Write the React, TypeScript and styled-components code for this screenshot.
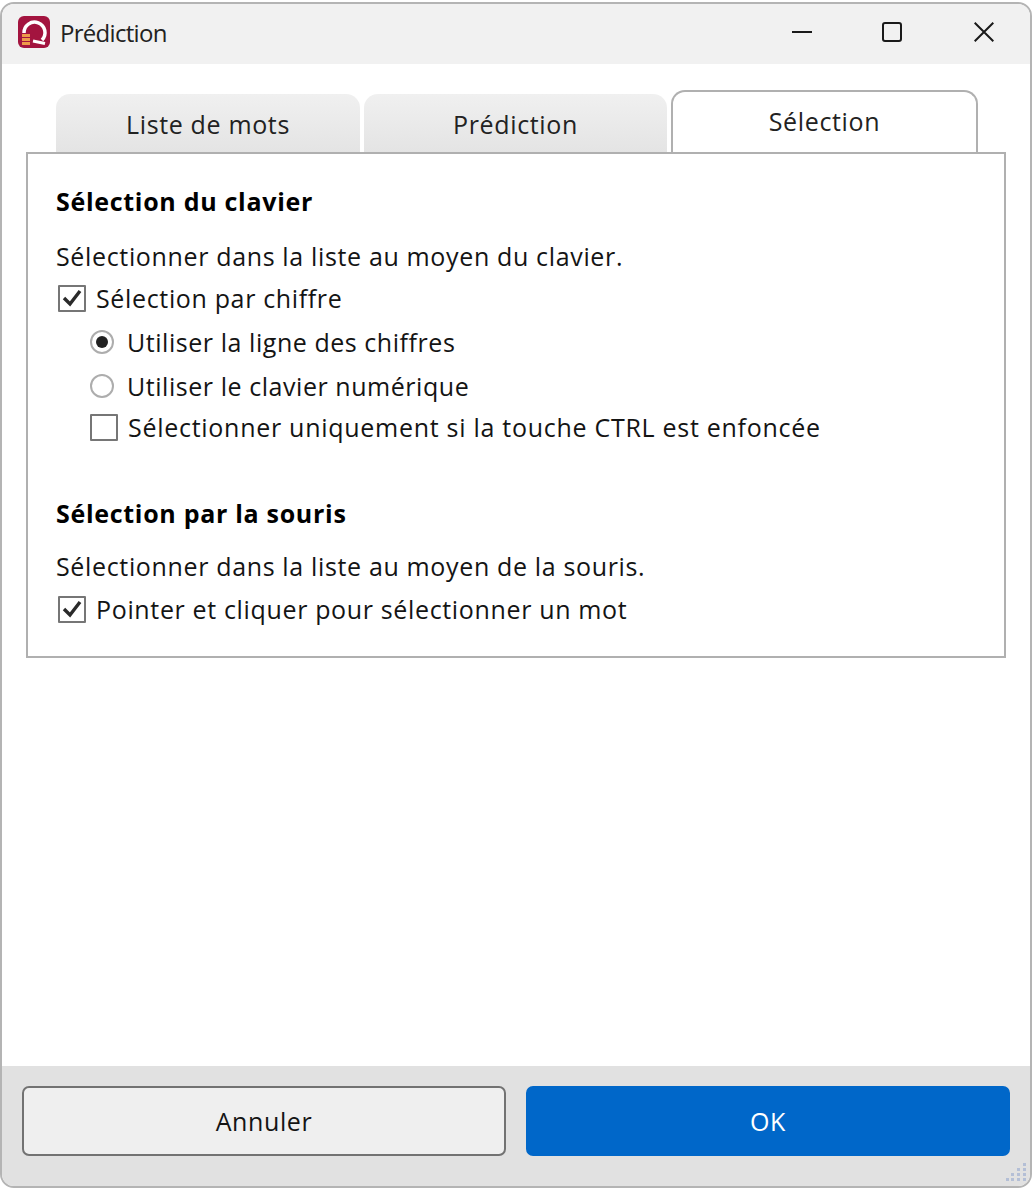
import styled, { createGlobalStyle } from 'styled-components';

const GlobalStyle = createGlobalStyle`
  html, body {
    margin: 0;
    padding: 0;
    background: #ffffff;
  }
  * {
    box-sizing: border-box;
  }
`;

const FONT = `"Open Sans", "Noto Sans", "Liberation Sans", sans-serif`;

const Page = styled.div`
  width: 1034px;
  height: 1190px;
  padding: 2px 2px 2px 0;
  font-family: ${FONT};
  font-size: 25px;
  letter-spacing: 0.65px;
  color: #141414;
`;

const Window = styled.div`
  position: relative;
  width: 100%;
  height: 100%;
  display: flex;
  flex-direction: column;
  border: 2px solid #b4b4b4;
  border-radius: 14px;
  overflow: hidden;
  background: #ffffff;
`;

const TitleBar = styled.div`
  height: 60px;
  flex-shrink: 0;
  display: flex;
  align-items: center;
  padding: 0 0 4px 16px;
  background: #f1f1f1;
`;

const Logo = styled.svg`
  width: 32px;
  height: 32px;
  margin-right: 10px;
`;

const TitleText = styled.span`
  flex: 1;
  font-size: 24px;
  color: #222222;
  letter-spacing: -0.7px;
`;

const WindowButton = styled.div<{ $right: number }>`
  width: 24px;
  height: 24px;
  margin-right: ${p => p.$right}px;
  display: flex;
  align-items: center;
  justify-content: center;
`;

const Content = styled.div`
  flex: 1;
  display: flex;
  flex-direction: column;
  padding: 26px 24px 0 24px;
`;

const TabRow = styled.div`
  height: 62px;
  display: flex;
  align-items: flex-end;
  gap: 4px;
  padding-left: 30px;
`;

const Tab = styled.div<{ $active?: boolean; $width: number }>`
  width: ${p => p.$width}px;
  height: ${p => (p.$active ? 62 : 58)}px;
  display: flex;
  align-items: center;
  justify-content: center;
  padding: ${p => (p.$active ? '0 0 2px' : '2px 0 0')};
  border-radius: 14px 14px 0 0;
  border: ${p => (p.$active ? '2px solid #b0b0b0' : 'none')};
  border-bottom: none;
  background: ${p => (p.$active ? '#ffffff' : 'linear-gradient(180deg, #f0f0f0 0%, #e4e4e4 100%)')};
  color: #222222;
`;

const Panel = styled.div`
  width: 980px;
  height: 506px;
  display: flex;
  flex-direction: column;
  padding: 25px 28px 0 28px;
  border: 2px solid #b0b0b0;
`;

const Heading = styled.div`
  height: 44px;
  line-height: 44px;
  font-weight: 700;
  color: #000000;
  letter-spacing: 0.7px;
`;

const Description = styled.div<{ $tight?: boolean }>`
  height: 40px;
  line-height: 40px;
  margin: ${p => (p.$tight ? '11px 0 1px' : '13px 0 0')};
`;

const OptionRow = styled.label<{ $indent?: boolean; $height?: number; $after?: number; $spacing?: number }>`
  height: ${p => p.$height ?? 44}px;
  margin-bottom: ${p => p.$after ?? 0}px;
  display: flex;
  align-items: center;
  gap: 10px;
  padding-left: ${p => (p.$indent ? 34 : 2)}px;
  letter-spacing: ${p => p.$spacing ?? 0.65}px;
`;

const CheckBox = styled.span`
  width: 28px;
  height: 27px;
  flex-shrink: 0;
  display: flex;
  align-items: center;
  justify-content: center;
  border: 2px solid #767676;
  border-radius: 1px;
  background: #ffffff;
`;

const Radio = styled.span`
  width: 24px;
  height: 24px;
  margin-right: 3px;
  flex-shrink: 0;
  display: flex;
  align-items: center;
  justify-content: center;
  border: 2px solid #adadad;
  border-radius: 50%;
  background: #ffffff;
`;

const RadioDot = styled.span`
  width: 12px;
  height: 12px;
  border-radius: 50%;
  background: #222222;
`;

const Footer = styled.div`
  height: 120px;
  flex-shrink: 0;
  display: flex;
  gap: 20px;
  padding: 20px 20px 0 20px;
  background: #e1e1e1;
`;

const FooterButton = styled.button<{ $primary?: boolean }>`
  flex: 1;
  height: 70px;
  padding: 0;
  font-family: ${FONT};
  font-size: 25px;
  letter-spacing: 0.6px;
  border-radius: 7px;
  border: 2px solid ${p => (p.$primary ? '#0067c9' : '#727272')};
  background: ${p => (p.$primary ? '#0067c9' : '#efefef')};
  color: ${p => (p.$primary ? '#ffffff' : '#141414')};
`;

const Grip = styled.svg`
  position: absolute;
  right: 2px;
  bottom: 2px;
  width: 24px;
  height: 24px;
`;

const Check = () => (
  <svg width="20" height="18" viewBox="0 0 20 18">
    <path d="M2 9 L8 15 L18 2" fill="none" stroke="#2a2a2a" strokeWidth="3.4" />
  </svg>
);

const gripDots = [
  [19, 3],
  [13, 8],
  [19, 8],
  [13, 13],
  [19, 13],
  [7, 13],
  [2, 18],
  [7, 18],
  [13, 18],
  [19, 18],
];

const App = () => (
  <>
    <GlobalStyle />
    <Page>
      <Window>
        <TitleBar>
          <Logo viewBox="0 0 32 32">
            <rect width="32" height="32" rx="6" fill="#a3143f" />
            <path d="M6 17 A10.5 10.5 0 1 1 24 24" fill="none" stroke="#ffffff" strokeWidth="3.5" />
            <path d="M15 25 L27 27.5" stroke="#ffffff" strokeWidth="3" />
            <rect x="4" y="18" width="8" height="3" fill="#ee9a4a" />
            <rect x="4" y="22" width="8" height="3" fill="#ee9a4a" />
            <rect x="4" y="26" width="8" height="3" fill="#ee9a4a" />
          </Logo>
          <TitleText>Prédiction</TitleText>
          <WindowButton $right={66}>
            <svg width="20" height="2" viewBox="0 0 20 2">
              <rect width="20" height="2" fill="#1a1a1a" />
            </svg>
          </WindowButton>
          <WindowButton $right={68}>
            <svg width="20" height="20" viewBox="0 0 20 20">
              <rect x="1" y="1" width="18" height="18" rx="2" fill="none" stroke="#1a1a1a" strokeWidth="2" />
            </svg>
          </WindowButton>
          <WindowButton $right={34}>
            <svg width="20" height="20" viewBox="0 0 20 20">
              <path d="M0.7 0.7 L19.3 19.3 M19.3 0.7 L0.7 19.3" stroke="#1a1a1a" strokeWidth="2" />
            </svg>
          </WindowButton>
        </TitleBar>
        <Content>
          <TabRow>
            <Tab $width={304}>Liste de mots</Tab>
            <Tab $width={303}>Prédiction</Tab>
            <Tab $width={307} $active>Sélection</Tab>
          </TabRow>
          <Panel>
            <Heading>Sélection du clavier</Heading>
            <Description>Sélectionner dans la liste au moyen du clavier.</Description>
            <OptionRow>
              <CheckBox><Check /></CheckBox>
              Sélection par chiffre
            </OptionRow>
            <OptionRow $indent $spacing={0.55}>
              <Radio><RadioDot /></Radio>
              Utiliser la ligne des chiffres
            </OptionRow>
            <OptionRow $indent $spacing={0.55}>
              <Radio />
              Utiliser le clavier numérique
            </OptionRow>
            <OptionRow $indent $height={38} $after={45} $spacing={0.72}>
              <CheckBox />
              Sélectionner uniquement si la touche CTRL est enfoncée
            </OptionRow>
            <Heading>Sélection par la souris</Heading>
            <Description $tight>Sélectionner dans la liste au moyen de la souris.</Description>
            <OptionRow>
              <CheckBox><Check /></CheckBox>
              Pointer et cliquer pour sélectionner un mot
            </OptionRow>
          </Panel>
        </Content>
        <Footer>
          <FooterButton>Annuler</FooterButton>
          <FooterButton $primary>OK</FooterButton>
        </Footer>
        <Grip viewBox="0 0 24 24">
          {gripDots.map(([x, y]) => (
            <rect key={`${x}-${y}`} x={x} y={y} width="3" height="3" fill="#b4bfd6" />
          ))}
        </Grip>
      </Window>
    </Page>
  </>
);

export default App;
